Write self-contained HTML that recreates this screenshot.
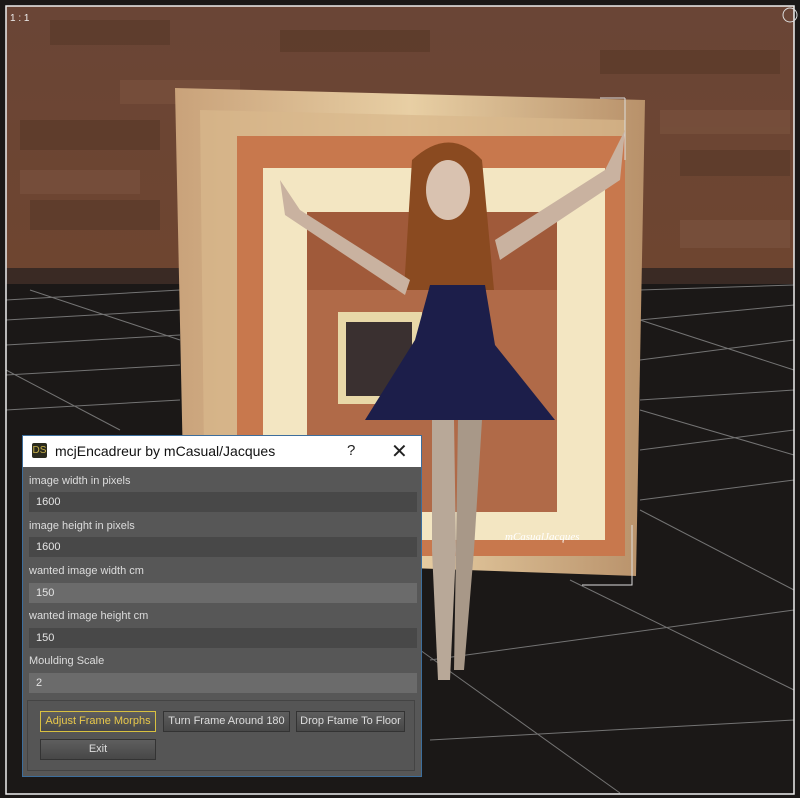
<!DOCTYPE html>
<html><head><style>
body{margin:0;width:800px;height:798px;overflow:hidden;background:#222;font-family:"Liberation Sans",sans-serif}
#bg{position:absolute;left:0;top:0}
.dlg{position:absolute;left:22px;top:435px;width:400px;height:342px;background:#575757;border:1px solid #3d6e9c;box-sizing:border-box}
.tb{height:31px;background:#fff;position:relative}
.tb .ic{position:absolute;left:9px;top:7px;width:15px;height:15px;background:#2b2b1e;color:#c9b24a;font-size:10px;line-height:15px;text-align:center;border-radius:2px}
.tb .t{position:absolute;left:32px;top:7px;font-size:14px;color:#111}
.tb .q{position:absolute;left:324px;top:6px;font-size:15px;color:#222}
.tb .x{position:absolute;left:368px;top:3px;font-size:20px;color:#222}
.lb{position:absolute;left:6px;font-size:11px;color:#ddd}
.fd{position:absolute;left:6px;width:388px;height:20px;background:#484848;font-size:11px;color:#e4e4e4;line-height:21px;padding-left:7px;box-sizing:border-box}
.fd.l{background:#6b6b6b}
.pn{position:absolute;left:4px;top:264px;width:388px;height:71px;border:1px solid #444;box-sizing:border-box;background:#555}
.bt{position:absolute;height:21px;background:linear-gradient(#5e5e5e,#474747);border:1px solid #333;box-sizing:border-box;font-size:11px;color:#ddd;text-align:center;line-height:19px}
</style></head><body>
<svg id="bg" width="800" height="798">
<defs>
<linearGradient id="w" x1="0" y1="0" x2="0" y2="1"><stop offset="0" stop-color="#6a4536"/><stop offset="1" stop-color="#6e4530"/></linearGradient>
<linearGradient id="fr" x1="0" y1="0" x2="1" y2="0"><stop offset="0" stop-color="#c9a27a"/><stop offset=".5" stop-color="#e8cfa4"/><stop offset="1" stop-color="#b8916a"/></linearGradient>
</defs>
<rect width="800" height="798" fill="#1b1817"/>
<rect x="6" y="6" width="788" height="264" fill="url(#w)"/>
<g fill="#5a3a2a" opacity=".7"><rect x="50" y="20" width="120" height="25"/><rect x="280" y="30" width="150" height="22"/><rect x="600" y="50" width="180" height="24"/><rect x="20" y="120" width="140" height="30"/><rect x="680" y="150" width="110" height="26"/><rect x="30" y="200" width="130" height="30"/></g>
<g fill="#7c5440" opacity=".6"><rect x="120" y="80" width="120" height="24"/><rect x="660" y="110" width="130" height="24"/><rect x="20" y="170" width="120" height="24"/><rect x="680" y="220" width="110" height="28"/></g>
<rect x="6" y="268" width="788" height="16" fill="#3a2a24"/>
<g stroke="#8a8a8a" stroke-width="1" opacity=".8">
<line x1="6" y1="300" x2="180" y2="290"/><line x1="6" y1="320" x2="180" y2="310"/><line x1="6" y1="345" x2="180" y2="335"/><line x1="6" y1="375" x2="180" y2="365"/><line x1="6" y1="410" x2="180" y2="400"/>
<line x1="30" y1="290" x2="180" y2="340"/><line x1="6" y1="370" x2="120" y2="430"/>
<line x1="640" y1="290" x2="794" y2="285"/><line x1="640" y1="320" x2="794" y2="305"/><line x1="640" y1="360" x2="794" y2="340"/><line x1="640" y1="400" x2="794" y2="390"/><line x1="640" y1="450" x2="794" y2="430"/><line x1="640" y1="500" x2="794" y2="480"/>
<line x1="640" y1="320" x2="794" y2="370"/><line x1="640" y1="410" x2="794" y2="455"/><line x1="640" y1="510" x2="794" y2="590"/>
<line x1="430" y1="660" x2="794" y2="610"/><line x1="430" y1="740" x2="794" y2="720"/><line x1="570" y1="580" x2="794" y2="690"/><line x1="420" y1="650" x2="620" y2="793"/>
</g>
<polygon points="175,88 645,100 636,576 185,560" fill="url(#fr)"/>
<polygon points="200,110 625,120 618,555 205,540" fill="#d8b88c" opacity=".7"/>
<rect x="237" y="136" width="388" height="420" fill="#c8784d"/>
<rect x="263" y="168" width="342" height="372" fill="#f3e6c2"/>
<rect x="307" y="212" width="250" height="300" fill="#a05a3a"/>
<rect x="307" y="290" width="250" height="222" fill="#b06a48"/>
<rect x="338" y="312" width="84" height="92" fill="#e8d8a8"/>
<rect x="346" y="322" width="66" height="74" fill="#3a3030"/>
<path d="M625 98v62M600 98h25" stroke="#ddd" fill="none"/>
<path d="M632 525v60h-50" stroke="#ddd" fill="none"/>
<rect x="6" y="6" width="788" height="788" fill="none" stroke="#eee" stroke-width="1.5"/>
<text x="10" y="21" fill="#eee" font-size="10" font-family="Liberation Sans">1 : 1</text>
<circle cx="790" cy="15" r="7" fill="none" stroke="#ddd"/>
<path d="M412 160q38-35 70 0l12 130h-90z" fill="#8a4a20"/>
<ellipse cx="448" cy="190" rx="22" ry="30" fill="#d9c2b0"/>
<path d="M280 180l20 30 110 70-5 15-120-80z" fill="#c9b2a0"/>
<path d="M625 130l-20 40-110 70 5 20 120-80z" fill="#c9b2a0"/>
<path d="M430 285h55l10 60 60 75h-190l50-80z" fill="#1c1e4a"/>
<path d="M432 420h22l2 130-6 130h-12l-6-130z" fill="#b8a898"/>
<path d="M458 420h24l-8 130-10 120h-10l2-120z" fill="#a89888"/>
<text x="505" y="540" fill="#fff" font-size="11" font-style="italic" font-family="Liberation Serif">mCasualJacques</text>
</svg>
<div class="dlg">
<div class="tb"><div class="ic">DS</div><div class="t">mcjEncadreur by mCasual/Jacques</div><div class="q">?</div><div class="x">✕</div></div>
<div class="lb" style="top:39px">image width in pixels</div>
<div class="fd" style="top:56px">1600</div>
<div class="lb" style="top:84px">image height in pixels</div>
<div class="fd" style="top:101px">1600</div>
<div class="lb" style="top:129px">wanted image width cm</div>
<div class="fd l" style="top:147px">150</div>
<div class="lb" style="top:174px">wanted image height cm</div>
<div class="fd" style="top:192px">150</div>
<div class="lb" style="top:219px">Moulding Scale</div>
<div class="fd l" style="top:237px">2</div>
<div class="pn">
<div class="bt" style="left:12px;top:10px;width:116px;border-color:#d8c040;color:#e8c84a">Adjust Frame Morphs</div>
<div class="bt" style="left:135px;top:10px;width:127px">Turn Frame Around 180</div>
<div class="bt" style="left:268px;top:10px;width:109px">Drop Ftame To Floor</div>
<div class="bt" style="left:12px;top:38px;width:116px">Exit</div>
</div>
</div>
</body></html>
